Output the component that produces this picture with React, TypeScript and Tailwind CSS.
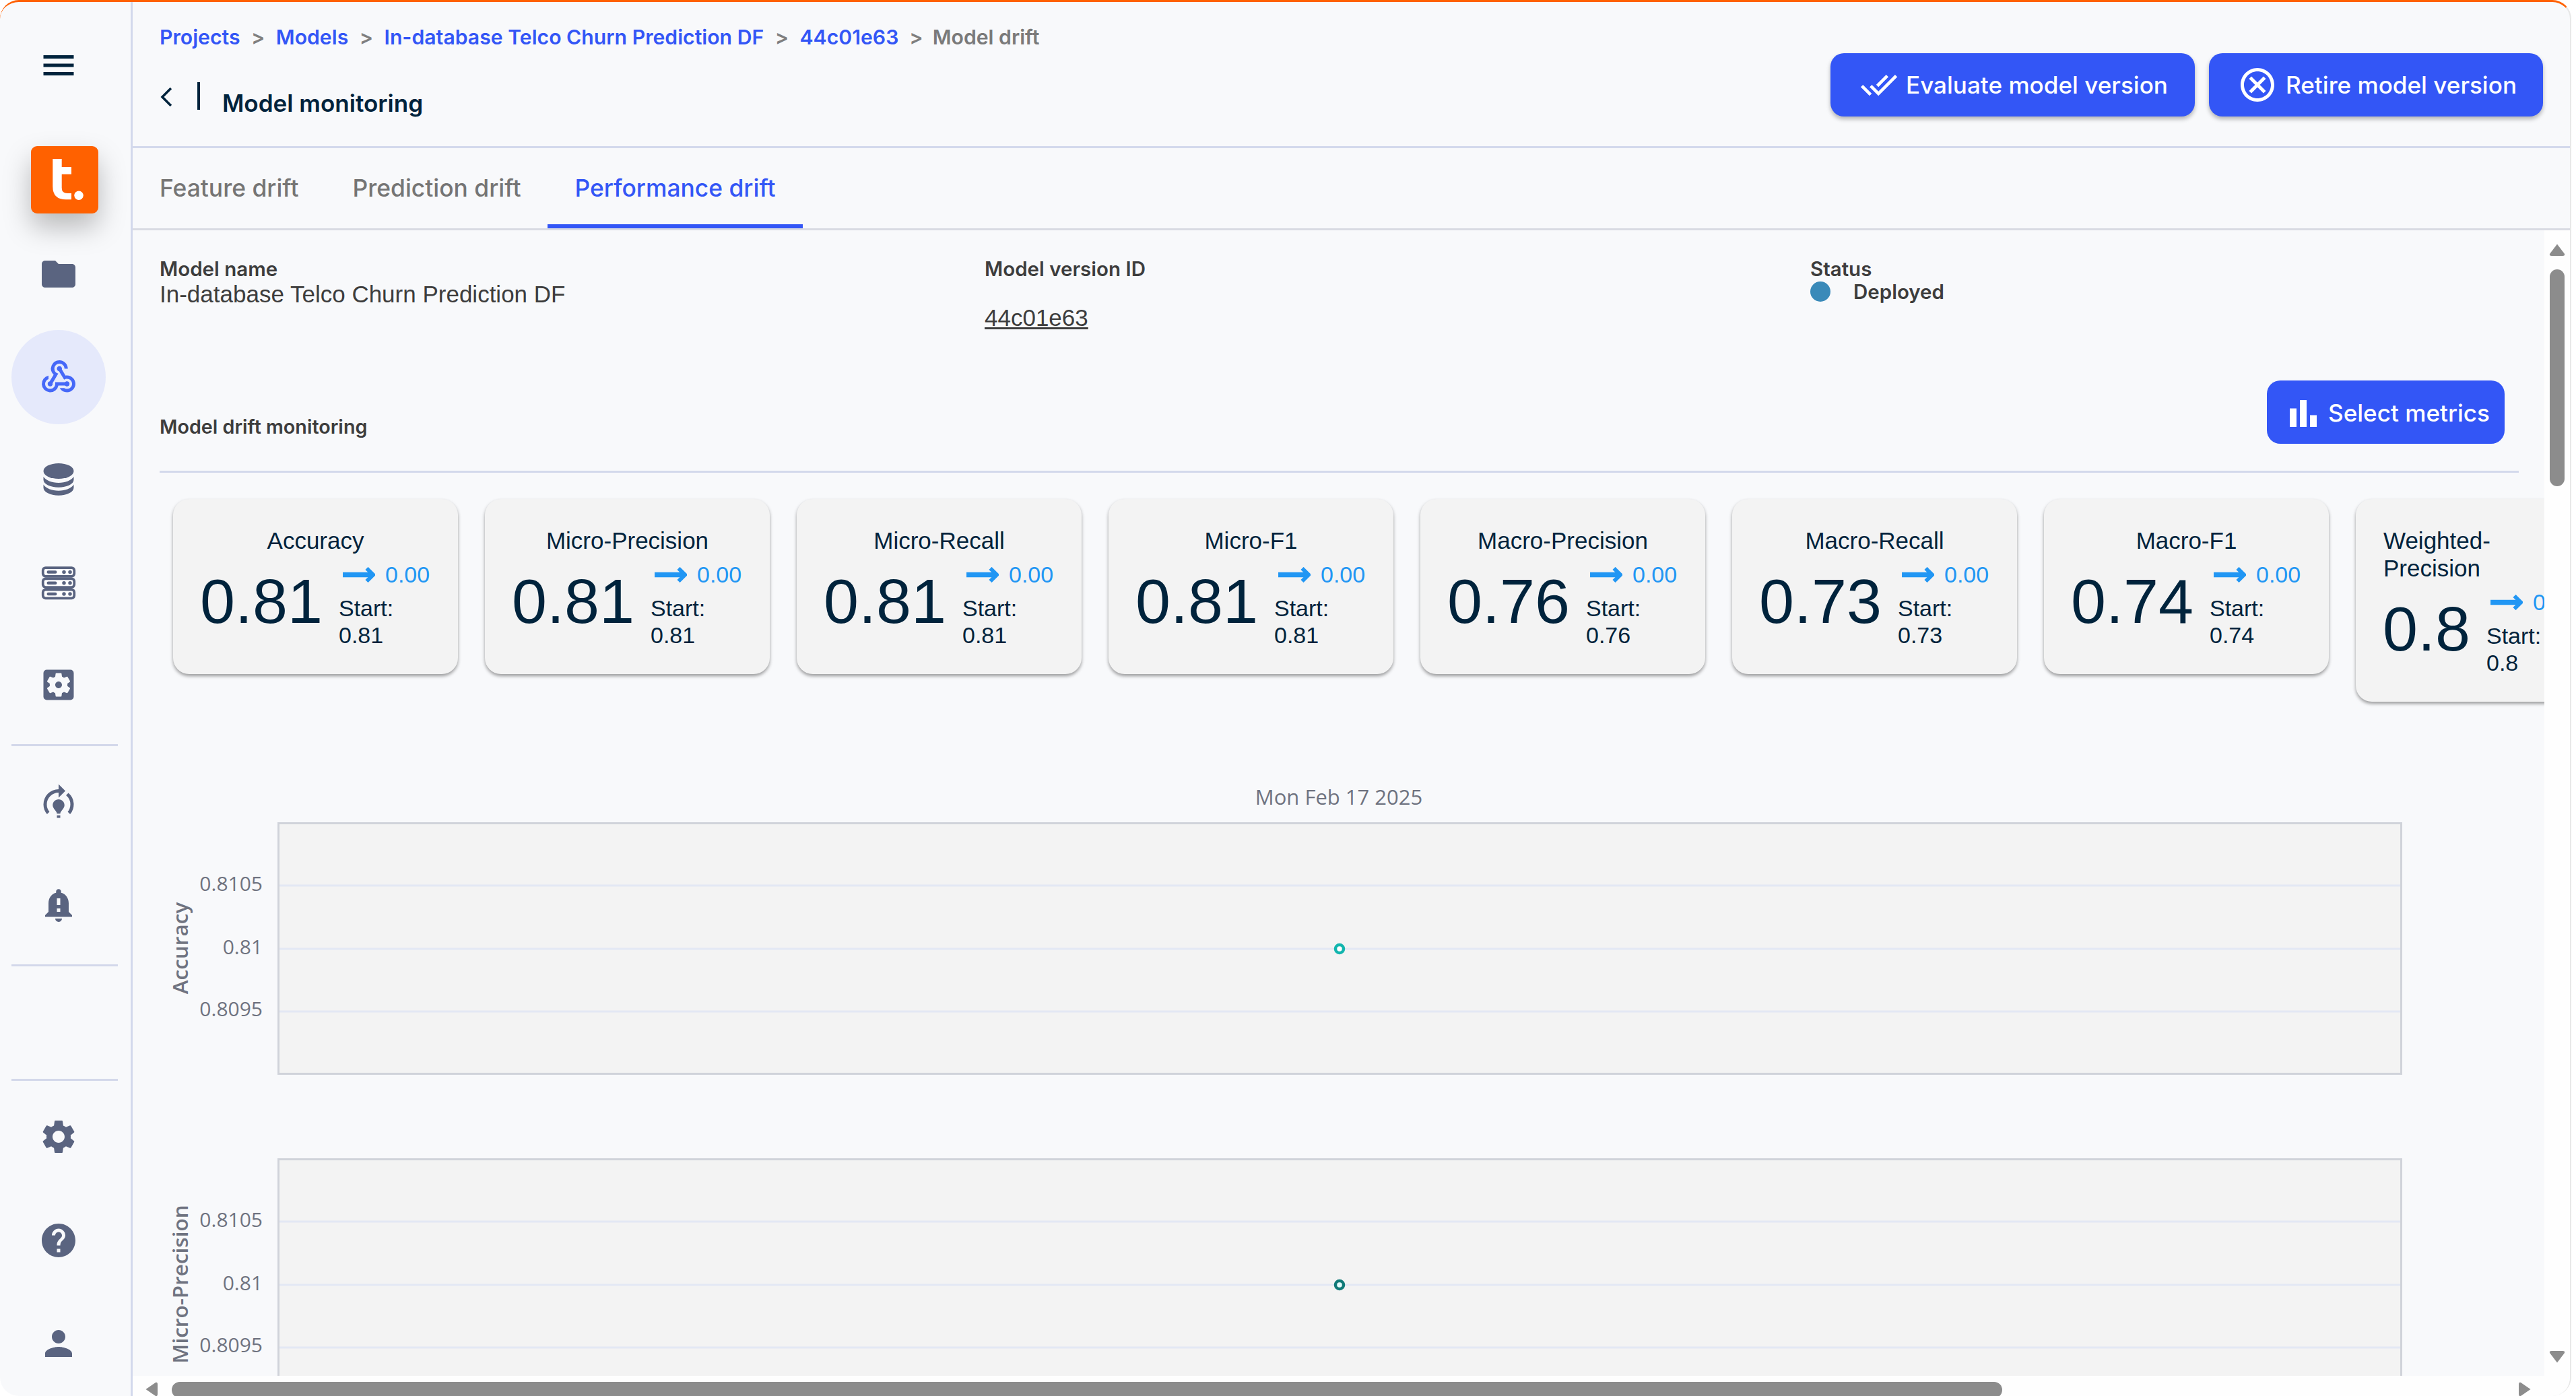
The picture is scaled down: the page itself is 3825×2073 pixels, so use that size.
import React from "react";
import {
  MdMenu, MdFolder, MdWebhook, MdSettingsApplications, MdModelTraining, MdNotificationImportant,
  MdSettings, MdHelp, MdPerson, MdDoneAll, MdOutlineCancel, MdBarChart, MdArrowBackIosNew,
} from "react-icons/md";

const Db = () => (
  <svg viewBox="0 0 24 24" className="w-[60px] h-[60px]" fill="#5a6480">
    <ellipse cx="12" cy="7" rx="9" ry="4.6" />
    <path d="M3 10.3V12.2c0 2.5 4 4.5 9 4.5s9-2 9-4.5v-1.9c-1.3 2.2-5 3.7-9 3.7s-7.7-1.5-9-3.7z" />
    <path d="M3 15v1.9c0 2.5 4 4.6 9 4.6s9-2.1 9-4.6V15c-1.3 2.2-5 3.7-9 3.7S4.3 17.2 3 15z" />
  </svg>
);

const Server = () => (
  <svg viewBox="0 0 24 24" className="w-[60px] h-[60px]">
    {[2.5, 9, 15.5].map((y) => (
      <g key={y}>
        <rect x="2.7" y={y + 0.7} width="18.6" height="5.1" rx="1.6" fill="#fff" stroke="#5a6480" strokeWidth="1.5" />
        <rect x="5" y={y + 2.4} width="6" height="1.8" rx="0.9" fill="#5a6480" />
        <circle cx="15.2" cy={y + 3.3} r="1.1" fill="#5a6480" />
        <circle cx="18.8" cy={y + 3.3} r="1.1" fill="#5a6480" />
      </g>
    ))}
  </svg>
);

const iconCls = "w-[60px] h-[60px] text-[#5a6480]";

const SideItem = ({ children, cls }: { children: React.ReactNode; cls: string }) => (
  <div className={`w-[174px] flex items-center justify-center ${cls}`}>{children}</div>
);

const Divider = ({ cls }: { cls: string }) => <div className={`h-[3px] w-[158px] ml-[17px] bg-[#d3d8ea] shrink-0 ${cls}`} />;

const Sidebar = () => (
  <aside className="w-[194px] shrink-0 border-r-[3px] border-[#d3d9ec] box-content flex flex-col">
    <div className="w-[174px] h-[188px] shrink-0 flex items-center justify-center">
      <MdMenu className="w-[60px] h-[60px] text-[#00233c]" />
    </div>
    <div className="mt-[26px] ml-[46px] w-[100px] h-[100px] rounded-[9px] bg-[#ff6100] shadow-[0_20px_40px_rgba(0,0,0,0.26)] shrink-0">
      <svg viewBox="0 0 100 100" className="w-full h-full" fill="#fff">
        <path d="M32.3 19H45.7V31H60V41.7H45.7V62Q45.7 70 54 70H60V79.3H52Q32.3 79.3 32.3 60Z" />
        <circle cx="71" cy="73.3" r="6.7" />
      </svg>
    </div>
    <div className="mt-[14px] flex flex-col">
      <SideItem cls="h-[152.5px]"><MdFolder className={iconCls} /></SideItem>
      <SideItem cls="h-[152.5px]">
        <div className="w-[140px] h-[140px] rounded-full bg-[#e5e9fb] flex items-center justify-center">
          <MdWebhook className="w-[60px] h-[60px] text-[#4668f8]" />
        </div>
      </SideItem>
      <SideItem cls="h-[152.5px]"><Db /></SideItem>
      <SideItem cls="h-[152.5px]"><Server /></SideItem>
      <SideItem cls="h-[152.5px]"><MdSettingsApplications className={iconCls} /></SideItem>
    </div>
    <Divider cls="mt-[11px]" />
    <div className="mt-[8px] flex flex-col">
      <SideItem cls="h-[152.5px]"><MdModelTraining className={iconCls} /></SideItem>
      <SideItem cls="h-[152.5px]"><MdNotificationImportant className={iconCls} /></SideItem>
    </div>
    <Divider cls="mt-[11px]" />
    <Divider cls="mt-[167px]" />
    <div className="mt-[7px] flex flex-col">
      <SideItem cls="h-[153.5px]"><MdSettings className={iconCls} /></SideItem>
      <SideItem cls="h-[153.5px]"><MdHelp className={iconCls} /></SideItem>
      <SideItem cls="h-[153.5px]"><MdPerson className={iconCls} /></SideItem>
    </div>
  </aside>
);

const Crumbs = () => {
  const link = "text-[#3356f6]";
  const sep = "text-[#7f7f7f] mx-[16.5px]";
  return (
    <div className="flex items-center h-[40px] text-[30.2px] font-semibold whitespace-nowrap">
      <span className={link}>Projects</span><span className={sep}>&gt;</span>
      <span className={link}>Models</span><span className={sep}>&gt;</span>
      <span className={link}>In-database Telco Churn Prediction DF</span><span className={sep}>&gt;</span>
      <span className={link}>44c01e63</span><span className="text-[#7f7f7f] ml-[16px] mr-[14px]">&gt;</span>
      <span className="text-[#7a7a7a]">Model drift</span>
    </div>
  );
};

const Btn = ({ icon, label, cls }: { icon: React.ReactNode; label: string; cls: string }) => (
  <div className={`h-[94px] rounded-[20px] bg-[#3356f6] text-white flex items-center text-[35.1px] font-medium shadow-[0_4px_6px_rgba(0,0,0,0.28)] whitespace-nowrap ${cls}`}>
    {icon}
    <span>{label}</span>
  </div>
);

const Header = () => (
  <header className="h-[214px] shrink-0 border-b-[3px] border-[#d3d9ec] box-content flex justify-between pl-[40px] pr-[40px]">
    <div className="flex flex-col pt-[33px]">
      <Crumbs />
      <div className="flex items-start mt-[46px]">
        <MdArrowBackIosNew className="w-[34px] h-[34px] text-[#00233c] mt-[5px] ml-[-7px]" />
        <div className="w-[4px] h-[41px] bg-[#00233c] ml-[29px]" />
        <div className="ml-[33px] mt-[8px] text-[35.1px] leading-[46px] font-semibold text-[#00233c]">Model monitoring</div>
      </div>
    </div>
    <div className="flex gap-[21px] pt-[76px]">
      <Btn cls="w-[541px] pl-[44px] gap-[12px]" icon={<MdDoneAll className="w-[56px] h-[56px]" />} label="Evaluate model version" />
      <Btn cls="w-[496px] pl-[42px] gap-[12px]" icon={<MdOutlineCancel className="w-[60px] h-[60px]" />} label="Retire model version" />
    </div>
  </header>
);

const Tabs = () => {
  const base = "px-[40px] h-full flex items-center text-[35.4px] font-medium whitespace-nowrap";
  return (
    <nav className="h-[119px] shrink-0 border-b-[3px] border-[#d9dbe3] box-content flex">
      <div className={`${base} text-[#757575]`}>Feature drift</div>
      <div className={`${base} text-[#757575]`}>Prediction drift</div>
      <div className={`${base} text-[#3356f6] border-b-[6px] border-[#3356f6] pt-[6px]`}>Performance drift</div>
    </nav>
  );
};

const Meta = () => {
  const label = "text-[29.5px] leading-[34px] font-semibold text-[#3d3d3d]";
  return (
    <div className="grid grid-cols-[1225px_1226px_1fr] pt-[40px] pl-[40px] h-[223px]">
      <div>
        <div className={label}>Model name</div>
        <div className="text-[35px] leading-[42px] text-[#3d3d3d] [font-family:'Liberation_Sans',sans-serif]">In-database Telco Churn Prediction DF</div>
      </div>
      <div>
        <div className={label}>Model version ID</div>
        <div className="mt-[36px] text-[35px] leading-[40px] text-[#3d3d3d] underline [font-family:'Liberation_Sans',sans-serif]">44c01e63</div>
      </div>
      <div>
        <div className={label}>Status</div>
        <div className="flex items-center">
          <span className="w-[30px] h-[30px] rounded-full bg-[#3a8ab9]" />
          <span className="ml-[34px] text-[29.5px] leading-[34px] font-semibold text-[#3d3d3d]">Deployed</span>
        </div>
      </div>
    </div>
  );
};

const Arrow = () => (
  <svg viewBox="0 0 50 24" className="w-[48px] h-[23px]" fill="none" stroke="#2196f3">
    <path d="M0 12H44" strokeWidth="8" />
    <path d="M37 2L47 12L37 22" strokeWidth="6" />
  </svg>
);

type CardData = { title: string[]; value: string; start: string };

const Card = ({ title, value, start }: CardData) => (
  <div className="w-[423px] shrink-0 rounded-[24px] bg-[#f3f3f3] shadow-[0_3px_5px_rgba(0,0,0,0.38)] px-[38px] pt-[41px] pb-[38px] text-[#00233c] [font-family:'Liberation_Sans',sans-serif]">
    {title.length > 1 ? (
      <div className="pl-[3px] text-[35px] leading-[41px]">{title[0]}<br />{title[1]}</div>
    ) : (
      <div className="text-center text-[35px] leading-[41px]">{title[0]}</div>
    )}
    <div className="flex gap-[24px]">
      <div className="h-[140px] flex items-center text-[93.5px] leading-none pl-[2px]">{value}</div>
      <div className="pt-[10px] flex flex-col text-[34px] leading-[40px] whitespace-nowrap">
        <div className="flex items-center gap-[15px] ml-[6px] text-[#2196f3]"><Arrow /><span>0.00</span></div>
        <div className="mt-[10px]">Start:</div>
        <div>{start}</div>
      </div>
    </div>
  </div>
);

const cards: CardData[] = [
  { title: ["Accuracy"], value: "0.81", start: "0.81" },
  { title: ["Micro-Precision"], value: "0.81", start: "0.81" },
  { title: ["Micro-Recall"], value: "0.81", start: "0.81" },
  { title: ["Micro-F1"], value: "0.81", start: "0.81" },
  { title: ["Macro-Precision"], value: "0.76", start: "0.76" },
  { title: ["Macro-Recall"], value: "0.73", start: "0.73" },
  { title: ["Macro-F1"], value: "0.74", start: "0.74" },
  { title: ["Weighted-", "Precision"], value: "0.8", start: "0.8" },
];

const Chart = ({ name, dot, dotFill, title }: { name: string; dot: string; dotFill: string; title?: string }) => {
  const tick = { fontSize: 30, fill: "#6f7380", textAnchor: "end" as const };
  return (
    <svg width="3400" height="499" className="block shrink-0 overflow-visible [font-family:'Open_Sans',sans-serif]">
      {title && <text x="1751" y="46" fontSize="31" fill="#6f7380" textAnchor="middle">{title}</text>}
      <rect x="176.5" y="73.5" width="3152" height="372" fill="#f3f3f3" stroke="#d0d3da" strokeWidth="3" />
      {[166, 260, 353].map((y) => (
        <line key={y} x1="178" x2="3327" y1={y} y2={y} stroke="#e3e8f4" strokeWidth="3" />
      ))}
      <text x="153" y="174" {...tick}>0.8105</text>
      <text x="153" y="268" {...tick}>0.81</text>
      <text x="153" y="360" {...tick}>0.8095</text>
      <text transform="translate(42 259) rotate(-90)" fontSize="31.5" fontWeight="600" fill="#6f7380" textAnchor="middle">{name}</text>
      <circle cx="1752" cy="260" r="6" fill="#fff" stroke={dot} strokeWidth="4.5" />
      <circle cx="1752" cy="260" r="3" fill={dotFill} />
    </svg>
  );
};

const Content = () => (
  <div className="flex-1 min-w-0 h-full overflow-hidden bg-[#f8f9fb]">
    <div className="w-[3800px]">
      <Meta />
      <div className="ml-[40px] w-[3503px] h-[137px] border-b-[3px] border-[#d3d9ec] flex justify-between pr-[21px]">
        <div className="self-end mb-[48px] text-[28.7px] leading-[34px] font-semibold text-[#3d3d3d]">Model drift monitoring</div>
        <div className="h-[94px] w-[353px] rounded-[20px] bg-[#3356f6] text-white flex items-center pl-[24px] pt-[3px] gap-[7px] text-[35.1px] font-medium">
          <MdBarChart className="w-[60px] h-[60px] shrink-0" />
          <span>Select metrics</span>
        </div>
      </div>
      <div className="mt-[39px] pl-[60px] flex gap-[40px] items-start h-[300px]">
        {cards.map((c, i) => <Card key={i} {...c} />)}
      </div>
      <div className="mt-[108px] ml-[40px] flex flex-col">
        <Chart name="Accuracy" dot="#12b5ae" dotFill="#fff" title="Mon Feb 17 2025" />
        <Chart name="Micro-Precision" dot="#0f7a78" dotFill="#dff" />
      </div>
    </div>
  </div>
);

const VBar = () => (
  <div className="w-[38px] h-full shrink-0 flex flex-col items-center pt-[20px] pb-[19px] bg-[#fefefe]">
    <svg viewBox="0 0 24 18" className="w-[24px] h-[18px] shrink-0" fill="#8c8c8c"><path d="M12 0.5L23 15Q24 18 20 18H4Q0 18 1 15Z" /></svg>
    <div className="mt-[20px] w-[22px] h-[322px] rounded-full bg-[#8c8c8c] shrink-0" />
    <svg viewBox="0 0 24 18" className="mt-auto w-[24px] h-[18px] shrink-0" fill="#8c8c8c"><path d="M12 17.5L23 3Q24 0 20 0H4Q0 0 1 3Z" /></svg>
  </div>
);

const HBar = () => (
  <div className="h-[30px] shrink-0 flex items-start pt-[9px] pl-[19px] pr-[58px] bg-[#fefefe] overflow-hidden">
    <svg viewBox="0 0 18 22" className="w-[18px] h-[22px] shrink-0" fill="#8c8c8c"><path d="M0.5 11L15 1Q18 0 18 4V18Q18 22 15 21Z" /></svg>
    <div className="ml-[21px] w-[2718px] h-[24px] rounded-full bg-[#8c8c8c] shrink-0" />
    <svg viewBox="0 0 18 22" className="ml-auto w-[18px] h-[22px] shrink-0" fill="#8c8c8c"><path d="M17.5 11L3 1Q0 0 0 4V18Q0 22 3 21Z" /></svg>
  </div>
);

export default function App() {
  return (
    <div className="h-[2073px] w-[3825px] overflow-hidden bg-white [font-family:Inter,sans-serif]">
      <div className="w-[3818px] h-full flex overflow-hidden rounded-[28px] border-t-[3px] border-t-[#ff6100] border-r-[2px] border-r-[#e8e8e8] bg-[#f8f9fb]">
        <Sidebar />
        <main className="flex-1 min-w-0 flex flex-col">
          <Header />
          <Tabs />
          <div className="flex-1 min-h-0 flex">
            <Content />
            <VBar />
          </div>
          <HBar />
        </main>
      </div>
    </div>
  );
}
